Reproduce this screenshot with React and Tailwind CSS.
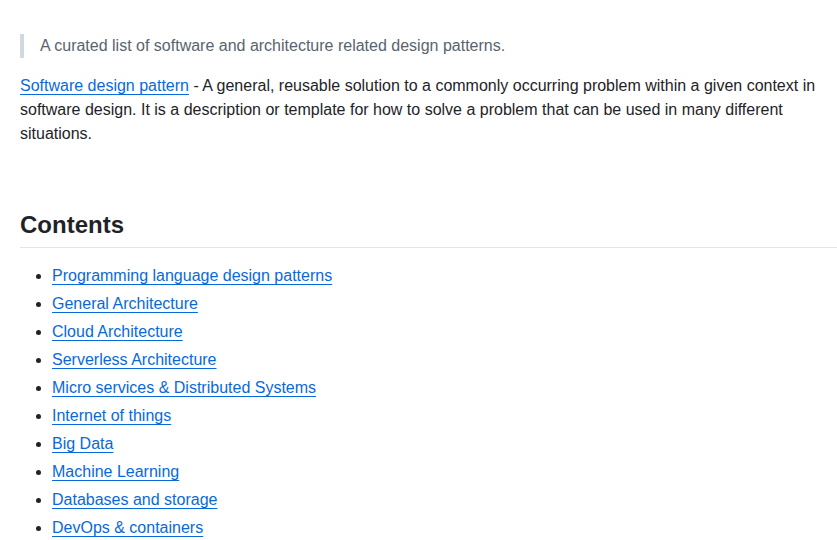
const items = [
  "Programming language design patterns",
  "General Architecture",
  "Cloud Architecture",
  "Serverless Architecture",
  "Micro services & Distributed Systems",
  "Internet of things",
  "Big Data",
  "Machine Learning",
  "Databases and storage",
  "DevOps & containers",
];

const linkClass = "text-[#0969da] underline underline-offset-[3.2px]";

export default function App() {
  return (
    <div className="h-[540px] w-[837px] overflow-hidden bg-white pl-5 pt-[34px] text-base leading-6 text-[#1f2328] font-['Liberation_Sans',Arial,sans-serif]">
      <blockquote className="mb-4 border-l-4 border-[#d1d9e0] pl-4 text-[#59636e]">
        A curated list of software and architecture related design patterns.
      </blockquote>
      <p className="mb-4">
        <a href="#" className={linkClass}>Software design pattern</a> - A general, reusable solution to a commonly occurring problem within a given context in software design. It is a description or template for how to solve a problem that can be used in many different situations.
      </p>
      <h2 className="mt-16 mb-4 border-b border-[#e3e6e9] pb-[7px] text-2xl leading-[30px] font-semibold">Contents</h2>
      <ul className="list-disc pl-8">
        {items.map((item) => (
          <li key={item} className="mt-1">
            <a href="#" className={linkClass}>{item}</a>
          </li>
        ))}
      </ul>
    </div>
  );
}
